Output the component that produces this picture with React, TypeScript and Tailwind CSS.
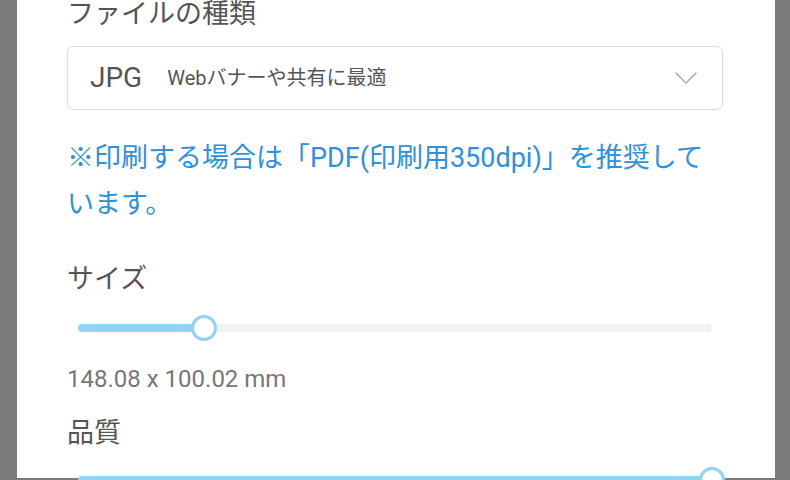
import { ChevronDown } from 'lucide-react';

const font = { fontFamily: 'Roboto, "Noto Sans CJK JP", sans-serif' };

function Slider({ value }: { value: number }) {
  return (
    <div className="relative mx-[11px] flex h-[26px] items-center">
      <div className="h-2 w-full rounded-full bg-[#f1f1f1]" />
      <div
        className="absolute left-0 top-[9px] h-2 rounded-full bg-[#93d1f5]"
        style={{ width: `${value}%` }}
      />
      <div
        className="absolute top-0 h-[26px] w-[26px] -translate-x-1/2 rounded-full border-[3px] border-[#93d1f5] bg-white"
        style={{ left: `${value}%` }}
      />
    </div>
  );
}

export default function App() {
  return (
    <div className="h-[480px] w-[790px] overflow-hidden bg-[#7b7b7d] pl-[17px] pr-[15px]" style={font}>
      <div className="h-full bg-white pl-[50px] pr-[52px]">
        <h2 className="-mt-[2px] text-[27px] leading-[32px] text-[#555]">ファイルの種類</h2>

        <div className="mt-[16px] flex h-[64px] items-center rounded-md border border-[#dcdcdc] pl-[22px] pr-[16px]">
          <span className="text-[28px] leading-none text-[#555]">JPG</span>
          <span className="ml-[25px] text-[20px] leading-none text-[#555]">Webバナーや共有に最適</span>
          <ChevronDown size={40} strokeWidth={0.9} className="ml-auto text-[#aaa]" />
        </div>

        <p className="mt-[25px] text-[27px] leading-[46px] text-[#3090d8]">
          ※印刷する場合は「PDF(印刷用350dpi)」を推奨しています。
        </p>

        <h2 className="mt-[36px] text-[27px] leading-[32px] text-[#555]">サイズ</h2>
        <div className="mt-[20px]">
          <Slider value={19.9} />
        </div>
        <p className="mt-[24px] text-[24px] leading-[28px] text-[#777]">148.08 x 100.02 mm</p>

        <h2 className="mt-[24px] text-[27px] leading-[32px] text-[#555]">品質</h2>
        <div className="mt-[18px]">
          <Slider value={100} />
        </div>
      </div>
    </div>
  );
}
